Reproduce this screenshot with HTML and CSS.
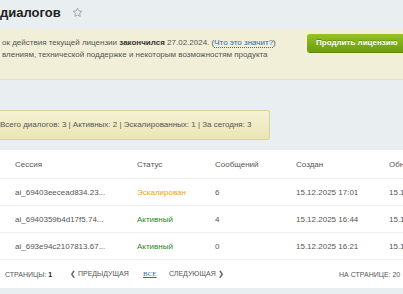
FILE: index.html
```html
<!DOCTYPE html>
<html lang="ru">
<head>
<meta charset="utf-8">
<link rel="stylesheet" href="styles.css">
</head>
<body>
<div class="page">
  <div class="title-row">
    <h1 class="title">диалогов</h1>
    <svg class="star" width="11" height="11" viewBox="0 0 24 24"><path d="M12 2.5l2.9 6.1 6.6.8-4.9 4.6 1.3 6.6L12 17.3l-5.9 3.3 1.3-6.6-4.9-4.6 6.6-.8z" fill="none" stroke="#9aa0a6" stroke-width="2" stroke-linejoin="round"/></svg>
  </div>

  <div class="notice">
    <div class="notice-text">
      <p>ок действия текущей лицензии <b>закончился</b> 27.02.2024. (<a class="help" href="#">Что это значит?</a>)</p>
      <p>влениям, технической поддержке и некоторым возможностям продукта</p>
    </div>
    <a class="btn" href="#">Продлить лицензию</a>
  </div>

  <div class="stats">Всего диалогов: 3 | Активных: 2 | Эскалированных: 1 | За сегодня: 3</div>

  <div class="card">
    <div class="row head">
      <span>Сессия</span><span>Статус</span><span>Сообщений</span><span>Создан</span><span>Обновлен</span>
    </div>
    <div class="row">
      <span>ai_69403eecead834.23...</span><span class="st-esc">Эскалирован</span><span>6</span><span>15.12.2025 17:01</span><span>15.12.2025 17:05</span>
    </div>
    <div class="row">
      <span>ai_6940359b4d17f5.74...</span><span class="st-act">Активный</span><span>4</span><span>15.12.2025 16:44</span><span>15.12.2025 16:50</span>
    </div>
    <div class="row last">
      <span>ai_693e94c2107813.67...</span><span class="st-act">Активный</span><span>0</span><span>15.12.2025 16:21</span><span>15.12.2025 16:21</span>
    </div>
    <div class="pager">
      <span class="pages">СТРАНИЦЫ: <b>1</b></span>
      <span class="nav prev">❮ ПРЕДЫДУЩАЯ</span>
      <a class="all" href="#">ВСЕ</a>
      <span class="nav next">СЛЕДУЮЩАЯ ❯</span>
      <span class="per">НА СТРАНИЦЕ: 20</span>
    </div>
  </div>
</div>
</body>
</html>
```
FILE: styles.css
```css
html, body {
  margin: 0;
  padding: 0;
  background: #e9eef1;
  overflow: hidden;
}
body {
  width: 403px;
  height: 294px;
  font-family: "Liberation Sans", Arial, sans-serif;
  color: #555;
}
.page {
  width: 560px;
}
.title-row {
  height: 29px;
  display: flex;
  align-items: center;
  gap: 11px;
}
.title {
  margin: 0;
  font-size: 13px;
  font-weight: bold;
  color: #222;
  line-height: 16px;
  position: relative;
  top: -2px;
}
.star {
  position: relative;
  top: -2px;
}
.notice {
  height: 51px;
  box-sizing: border-box;
  background: #f1efd8;
  border-bottom: 1px solid #e3e0bd;
  display: flex;
  align-items: flex-start;
  padding: 5px 0 0 2px;
}
.notice-text {
  width: 305px;
  padding-top: 3px;
}
.notice-text p {
  margin: 0;
  font-size: 8px;
  line-height: 12px;
  color: #555;
  white-space: nowrap;
}
.notice-text b {
  color: #333;
}
.help {
  color: #2a6db5;
  text-decoration: none;
  border-bottom: 1px dotted #2a6db5;
}
.btn {
  display: block;
  height: 18px;
  line-height: 18px;
  padding: 0 12px 0 9px;
  border-radius: 3px;
  background: linear-gradient(#94c226, #6c9c10);
  box-shadow: 0 1px 0 #5e8a0c;
  color: #fff;
  font-size: 8px;
  font-weight: bold;
  text-decoration: none;
  text-shadow: 0 -1px 0 rgba(0,0,0,0.25);
  white-space: nowrap;
}
.stats {
  margin-top: 30px;
  width: 270px;
  height: 30px;
  box-sizing: border-box;
  background: linear-gradient(#f5f2d4, #ebe5b5);
  border: 1px solid #d9d29c;
  border-left: none;
  border-radius: 0 3px 3px 0;
  font-size: 8px;
  line-height: 28px;
  color: #555;
  white-space: nowrap;
}
.card {
  margin-top: 10px;
  background: #fff;
}
.row {
  display: grid;
  grid-template-columns: 122px 78px 81px 93px 100px;
  padding-left: 15px;
  height: 26px;
  align-items: center;
  border-bottom: 1px solid #eceff1;
  font-size: 8px;
  color: #555;
  white-space: nowrap;
}
.row.head {
  height: 28px;
}
.st-esc { color: #eba412; }
.st-act { color: #2a8a22; }
.pager {
  height: 28px;
  display: flex;
  align-items: center;
  font-size: 7px;
  color: #555;
  white-space: nowrap;
  padding-left: 5px;
}
.pager b { color: #222; }
.pages { width: 65px; }
.prev { width: 73px; }
.all {
  width: 26px;
  font-family: "Liberation Serif", serif;
  color: #2a6db5;
  text-decoration: underline;
}
.next { width: 170px; }
```
